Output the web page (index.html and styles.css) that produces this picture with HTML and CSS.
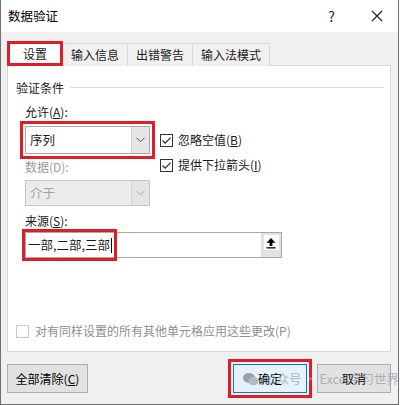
FILE: index.html
```html
<!DOCTYPE html>
<html lang="zh-CN">
<head>
<meta charset="utf-8">
<link rel="stylesheet" href="styles.css">
</head>
<body>
<div class="dialog">
  <div class="titlebar">
    <span class="title">数据验证</span>
    <span class="help">?</span>
    <svg class="close" width="12" height="12" viewBox="0 0 12 12"><path d="M1 1L11 11M11 1L1 11" stroke="#222" stroke-width="1.2" fill="none"/></svg>
  </div>
  <div class="body">
    <div class="tabs">
      <div class="tab active">设置</div>
      <div class="tab">输入信息</div>
      <div class="tab">出错警告</div>
      <div class="tab">输入法模式</div>
    </div>
    <div class="panel">
      <div class="legend"><span>验证条件</span><i class="rule"></i></div>
      <div class="criteria">
        <div class="left">
          <div class="label">允许(<u>A</u>):</div>
          <div class="combo mark">
            <span class="value">序列</span>
            <span class="drop"><svg width="9" height="6" viewBox="0 0 9 6"><path d="M0.5 0.8L4.5 4.8L8.5 0.8" stroke="#555" stroke-width="1" fill="none"/></svg></span>
          </div>
          <div class="label dim lbl-data">数据(D):</div>
          <div class="combo disabled">
            <span class="value">介于</span>
            <span class="drop"><svg width="9" height="6" viewBox="0 0 9 6"><path d="M0.5 0.8L4.5 4.8L8.5 0.8" stroke="#a8a8a8" stroke-width="1" fill="none"/></svg></span>
          </div>
        </div>
        <div class="checks">
          <div class="check"><svg class="box" width="13" height="13" viewBox="0 0 13 13"><rect x="0.5" y="0.5" width="12" height="12" fill="#fff" stroke="#333"/><path d="M2.5 6.5L5.2 9.2L10.5 3.6" stroke="#222" stroke-width="1.1" fill="none"/></svg><span>忽略空值(<u>B</u>)</span></div>
          <div class="check"><svg class="box" width="13" height="13" viewBox="0 0 13 13"><rect x="0.5" y="0.5" width="12" height="12" fill="#fff" stroke="#333"/><path d="M2.5 6.5L5.2 9.2L10.5 3.6" stroke="#222" stroke-width="1.1" fill="none"/></svg><span>提供下拉箭头(<u>I</u>)</span></div>
        </div>
      </div>
      <div class="label lbl-src">来源(<u>S</u>):</div>
      <div class="source">
        <div class="src-text">一部,二部,三部<i class="caret"></i></div>
        <div class="src-btn"><span class="src-icon"><svg width="12" height="12" viewBox="0 0 12 12"><path d="M6 1L10.5 5.8H7.4V9H4.6V5.8H1.5Z" fill="#000"/><rect x="1.5" y="10.2" width="9" height="1.3" fill="#000"/></svg></span></div>
        <i class="src-mark"></i>
      </div>
      <div class="apply-all">
        <svg class="box" width="13" height="13" viewBox="0 0 13 13"><rect x="0.5" y="0.5" width="12" height="12" fill="#fff" stroke="#c8c8c8"/></svg>
        <span>对有同样设置的所有其他单元格应用这些更改(P)</span>
      </div>
    </div>
    <div class="buttons">
      <div class="btn clear">全部清除(<u>C</u>)</div>
      <div class="btn ok">确定</div>
      <div class="btn cancel">取消</div>
      <div class="watermark">
        <svg width="16" height="14" viewBox="0 0 16 14"><ellipse cx="6" cy="6" rx="6" ry="5" fill="#9aa0a6"/><ellipse cx="10.5" cy="9" rx="5" ry="4.2" fill="#b5bac0"/></svg>
        <span>公众号 · Excel学习世界</span>
      </div>
    </div>
  </div>
</div>
</body>
</html>
```
FILE: styles.css
```css
* { box-sizing: border-box; }
html, body { margin: 0; padding: 0; background: #ffffff; }
body {
  font-family: "Noto Sans CJK SC", "Noto Sans", sans-serif;
  font-size: 12px;
  color: #1a1a1a;
}
u { text-decoration: underline; text-underline-offset: 1px; }

.dialog {
  width: 399px;
  height: 405px;
  border-left: 1px solid #6e6e6e;
  border-right: 1px solid #6e6e6e;
  border-bottom: 1px solid #6e6e6e;
  display: flex;
  flex-direction: column;
  background: #f0f0f0;
}

.titlebar {
  height: 32px;
  background: #ffffff;
  display: flex;
  align-items: center;
  padding-left: 7px;
  flex-shrink: 0;
}
.title { font-size: 12.5px; line-height: 16px; color: #000; }
.help { margin-left: auto; font-size: 14px; color: #222; margin-right: 36px; line-height: 16px; }
.close { margin-right: 15px; }

.body {
  flex: 1;
  display: flex;
  flex-direction: column;
  padding: 10px 6px 0 6px;
}

.tabs {
  display: flex;
  height: 24px;
  align-items: flex-end;
  position: relative;
  z-index: 1;
  margin-bottom: -1px;
}
.tab {
  height: 23px;
  line-height: 22px;
  padding: 0 8px;
  border: 1px solid #d9d9d9;
  border-bottom: none;
  border-left: none;
  background: #f0f0f0;
  color: #1a1a1a;
}
.tab.active {
  width: 56px;
  height: 25px;
  background: #ffffff;
  text-align: center;
  line-height: 25px;
  border: none;
  box-shadow: inset 0 0 0 3px #dc1f27;
}

.panel {
  height: 287px;
  width: 384px;
  background: #ffffff;
  border: 1px solid #d9d9d9;
  display: flex;
  flex-direction: column;
  padding: 14px 0 12px 0;
}

.legend {
  display: flex;
  align-items: center;
  padding-left: 8px;
  padding-right: 6px;
  line-height: 16px;
}
.rule { flex: 1; height: 1px; background: #dcdcdc; margin-left: 6px; margin-top: -2px; }

.criteria { display: flex; padding-left: 17px; margin-top: 8px; }
.left { width: 125px; display: flex; flex-direction: column; }
.label { line-height: 16px; }
.dim { color: #9c9c9c; }
.lbl-data { margin-top: 5px; }

.combo {
  margin-top: 6px;
  height: 28px;
  border: 1px solid #a9a9a9;
  background: #fff;
  display: flex;
  align-items: stretch;
  position: relative;
}
.combo .value { flex: 1; padding-left: 4px; line-height: 26px; font-size: 12.5px; }
.combo .drop {
  width: 18px;
  background: #e6e6e6;
  border-left: 1px solid #cfcfcf;
  display: flex;
  align-items: center;
  justify-content: center;
}
.combo.mark { outline: 3px solid #dc1f27; outline-offset: 2px; }
.combo.disabled { margin-top: 5px; height: 26px; background: #ececec; border-color: #c6c6c6; color: #a3a3a3; }
.combo.disabled .value { line-height: 24px; }
.combo.disabled .drop { background: #e4e4e4; border-left-color: #d2d2d2; }

.checks { display: flex; flex-direction: column; gap: 9px; padding-top: 28px; margin-left: 10px; }
.check { display: flex; align-items: center; line-height: 16px; }
.check .box { margin-right: 5px; flex-shrink: 0; }

.lbl-src { padding-left: 17px; margin-top: 7px; }
.source {
  margin-left: 17px;
  margin-top: 3px;
  width: 257px;
  height: 26px;
  border: 1px solid #a9a9a9;
  background: #fff;
  display: flex;
  position: relative;
}
.src-text { flex: 1; padding-left: 2px; line-height: 24px; font-size: 12.5px; display: flex; align-items: center; }
.caret { display: inline-block; width: 1px; height: 15px; background: #000; margin-left: 1px; }
.src-btn {
  width: 20px;
  background: #e1e1e1;
  display: flex;
  justify-content: center;
  padding-top: 2px;
}
.src-icon { width: 15px; height: 15px; background: #fff; display: flex; align-items: center; justify-content: center; }
.src-mark {
  position: absolute;
  left: -4px;
  top: -4px;
  width: 95px;
  height: 32px;
  border: 3px solid #dc1f27;
}

.apply-all {
  margin-top: auto;
  padding-left: 8px;
  display: flex;
  align-items: center;
  line-height: 16px;
  color: #8e8e8e;
}
.apply-all .box { margin-right: 6px; }

.buttons {
  display: flex;
  margin-top: 12px;
  position: relative;
  padding-right: 1px;
}
.btn {
  height: 29px;
  border: 1px solid #adadad;
  background: #e1e1e1;
  display: flex;
  align-items: center;
  justify-content: center;
  color: #000;
}
.btn.clear { width: 81px; }
.btn.ok {
  margin-left: auto;
  width: 74px;
  background: #e5f1fb;
  border: 1px solid #0078d7;
  box-shadow: inset 0 0 0 1px #e5f1fb;
  outline: 3px solid #dc1f27;
  outline-offset: 2px;
}
.btn.cancel { width: 74px; margin-left: 10px; }

.watermark {
  position: absolute;
  left: 236px;
  top: 7px;
  display: flex;
  align-items: center;
  gap: 5px;
  font-size: 12.5px;
  line-height: 16px;
  white-space: nowrap;
  color: rgba(150, 160, 170, 0.75);
  pointer-events: none;
}
```
